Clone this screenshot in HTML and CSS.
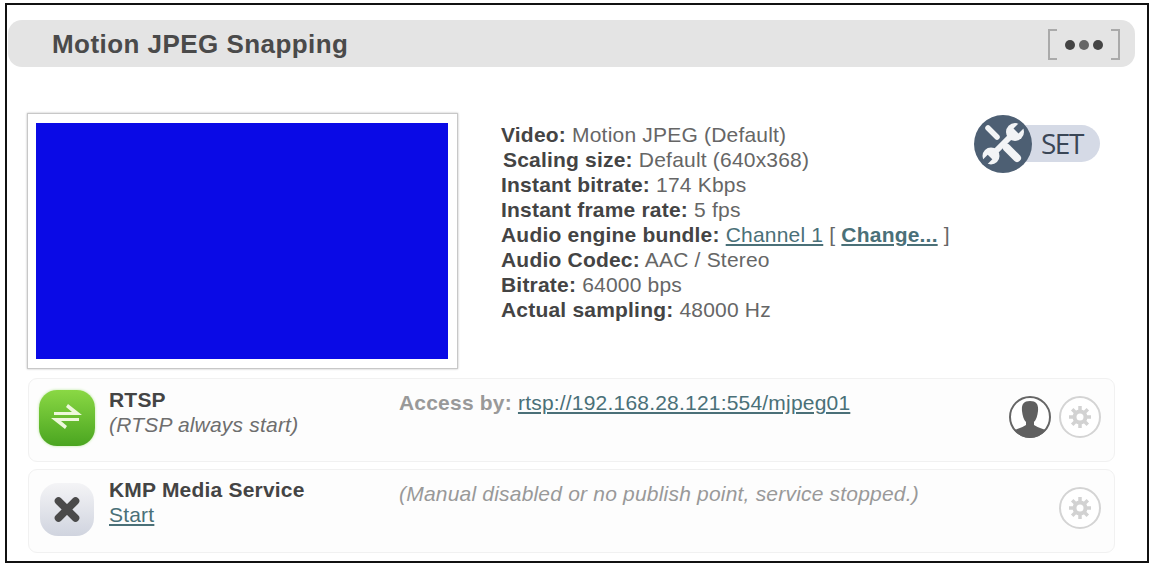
FILE: index.html
```html
<!DOCTYPE html>
<html lang="en">
<head>
<meta charset="utf-8">
<title>Motion JPEG Snapping</title>
<link rel="stylesheet" href="styles.css">
</head>
<body>
<main class="frame">
  <header class="head">
    <h1>Motion JPEG Snapping</h1>
    <span class="more"><i></i><i class="mid"></i><i></i></span>
  </header>
  <section class="top">
    <div class="thumb"><div class="video"></div></div>
    <div class="info">
      <div><b>Video:</b> Motion JPEG (Default)</div>
      <div class="nudge"><b>Scaling size:</b> Default (640x368)</div>
      <div><b>Instant bitrate:</b> 174 Kbps</div>
      <div><b>Instant frame rate:</b> 5 fps</div>
      <div><b>Audio engine bundle:</b> <a href="#">Channel 1</a> [ <a href="#" class="strong">Change...</a> ]</div>
      <div><b>Audio Codec:</b> AAC / Stereo</div>
      <div><b>Bitrate:</b> 64000 bps</div>
      <div><b>Actual sampling:</b> 48000 Hz</div>
    </div>
    <div class="set">
      <span class="set-icon">
        <svg viewBox="0 0 58 58" width="58" height="58" aria-hidden="true">
          <circle cx="29" cy="29" r="29" fill="#4d5f73"/>
          <path d="M14 13 L23 22" stroke="#f2f4f6" stroke-width="5.5" stroke-linecap="round"/>
          <path d="M33 33 L43 43" stroke="#f2f4f6" stroke-width="8" stroke-linecap="round"/>
          <path d="M19 39 L39 19" stroke="#f2f4f6" stroke-width="6"/>
          <circle cx="41" cy="17" r="9" fill="#f2f4f6"/>
          <circle cx="17" cy="41" r="8.5" fill="#f2f4f6"/>
          <path d="M42 16 L49 9" stroke="#4d5f73" stroke-width="7"/>
          <path d="M16 42 L9 49" stroke="#4d5f73" stroke-width="6.5"/>
        </svg>
      </span>
      <span class="set-label">SET</span>
    </div>
  </section>
  <section class="row">
    <span class="badge green">
      <svg viewBox="0 0 56 56" width="56" height="56" aria-hidden="true">
        <path d="M29 14 L43 25 H15 V22 H33 L27 17 Z" fill="#eef8dc"/>
        <path d="M26 39 L12 28 H40 V31 H22 L28 36 Z" fill="#eef8dc"/>
      </svg>
    </span>
    <div class="name"><b>RTSP</b><em>(RTSP always start)</em></div>
    <div class="detail"><b class="soft">Access by:</b> <a href="#">rtsp://192.168.28.121:554/mjpeg01</a></div>
    <div class="actions">
      <span class="user">
        <svg viewBox="0 0 44 44" width="44" height="44" aria-hidden="true">
          <circle cx="22" cy="22" r="20" fill="#fff" stroke="#666" stroke-width="2"/>
          <path d="M22 6 C15 6 13.5 10 14 16 C14.5 21 16 25 18 27 V30 C13 33 9 34 6 35 A20 20 0 0 0 38 35 C35 34 31 33 26 30 V27 C28 25 29.5 21 30 16 C30.5 10 29 6 22 6 Z" fill="#606060"/>
        </svg>
      </span>
      <span class="gear">
        <svg viewBox="0 0 44 44" width="44" height="44" aria-hidden="true">
          <circle cx="22" cy="22" r="20" fill="#fff" stroke="#d4d4d4" stroke-width="2"/>
          <circle cx="22" cy="22" r="7.5" fill="#d2d2d2"/>
          <path d="M22 11V33M11 22H33M14.2 14.2L29.8 29.8M29.8 14.2L14.2 29.8" stroke="#d2d2d2" stroke-width="3.5"/>
          <circle cx="22" cy="22" r="3.5" fill="#fff"/>
        </svg>
      </span>
    </div>
  </section>
  <section class="row second">
    <span class="badge grey">
      <svg viewBox="0 0 56 56" width="54" height="53" aria-hidden="true">
        <path d="M19 19 L37 37 M37 19 L19 37" stroke="#4a4a4a" stroke-width="8" stroke-linecap="round"/>
      </svg>
    </span>
    <div class="name"><b>KMP Media Service</b><a href="#">Start</a></div>
    <div class="detail"><em class="muted">(Manual disabled or no publish point, service stopped.)</em></div>
    <div class="actions">
      <span class="gear">
        <svg viewBox="0 0 44 44" width="44" height="44" aria-hidden="true">
          <circle cx="22" cy="22" r="20" fill="#fff" stroke="#d4d4d4" stroke-width="2"/>
          <circle cx="22" cy="22" r="7.5" fill="#d2d2d2"/>
          <path d="M22 11V33M11 22H33M14.2 14.2L29.8 29.8M29.8 14.2L14.2 29.8" stroke="#d2d2d2" stroke-width="3.5"/>
          <circle cx="22" cy="22" r="3.5" fill="#fff"/>
        </svg>
      </span>
    </div>
  </section>
</main>
</body>
</html>
```

FILE: styles.css
```css
* { box-sizing: border-box; }
html, body { margin: 0; padding: 0; background: #fff; }
body {
  width: 1153px;
  height: 566px;
  overflow: hidden;
  padding: 3px 4px 0 5px;
  font-family: "Liberation Sans", Arial, sans-serif;
  color: #666;
}
.frame {
  width: 1144px;
  height: 560px;
  border: 2px solid #111;
  padding: 15px 12px 0 1px;
  background: #fff;
}
.head {
  height: 47px;
  background: #e4e4e4;
  border-radius: 14px;
  display: flex;
  align-items: center;
  justify-content: space-between;
  padding: 0 15px 0 44px;
}
.head h1 {
  margin: 0;
  padding-top: 2px;
  font-size: 26px;
  letter-spacing: 0.45px;
  font-weight: bold;
  color: #4a4a4a;
}
.more {
  width: 72px;
  height: 31px;
  margin-top: 2px;
  display: flex;
  align-items: center;
  justify-content: center;
  gap: 4px;
  position: relative;
}
.more::before,
.more::after {
  content: "";
  position: absolute;
  top: 0;
  bottom: 0;
  width: 7px;
  border: 2px solid #aaa;
}
.more::before { left: 0; border-right: 0; }
.more::after { right: 0; border-left: 0; }
.more i {
  width: 10px;
  height: 10px;
  border-radius: 50%;
  background: #444;
}
.more i.mid { background: #666; }
.top {
  display: flex;
  align-items: flex-start;
  padding: 46px 0 0 19px;
  height: 311px;
}
.thumb {
  width: 431px;
  height: 256px;
  flex: none;
  background: #fff;
  border: 1px solid #c8c8c8;
  box-shadow: 0 0 2px #bbb;
  padding: 9px 9px 9px 8px;
}
.video {
  width: 412px;
  height: 236px;
  background: #0a0ae6;
}
.info {
  margin: 9px 0 0 43px;
  width: 473px;
  font-size: 21px;
  letter-spacing: 0.2px;
  line-height: 25px;
  white-space: nowrap;
}
.info b { color: #444; }
.nudge { padding-left: 2px; }
a { color: #4a7078; text-decoration: underline; }
a.strong { font-weight: bold; }
.set {
  margin: 2px 0 0 0;
  position: relative;
  flex: none;
  width: 126px;
  height: 58px;
}
.set-label {
  display: block;
  margin: 10px 0 0 40px;
  width: 86px;
  height: 37px;
  padding-left: 27px;
  background: #d5dae6;
  border-radius: 0 19px 19px 0;
  font-family: "Open Sans", sans-serif;
  font-size: 28px;
  letter-spacing: -1.5px;
  line-height: 37px;
  color: #3a4656;
}
.set-icon {
  position: absolute;
  left: 0;
  top: 0;
  z-index: 1;
  width: 58px;
  height: 58px;
}
.set-icon svg, .badge svg, .user svg, .gear svg {
  display: block;
  filter: blur(0.4px);
}
.row {
  margin-left: 20px;
  height: 84px;
  width: 1087px;
  border: 1px solid #f1f1f1;
  border-radius: 9px;
  background: #fdfdfd;
  display: flex;
  align-items: flex-start;
  padding: 8px 12px 0 10px;
  font-size: 21px;
  letter-spacing: 0.2px;
  line-height: 25px;
}
.row.second { margin-top: 7px; }
.badge {
  width: 56px;
  height: 56px;
  flex: none;
  border-radius: 18px;
  margin-top: 3px;
}
.green {
  background: linear-gradient(#8ad844, #4aa520);
  box-shadow: 0 0 3px #b8e89a;
}
.grey {
  width: 54px;
  height: 53px;
  margin: 5px 1px 0 1px;
  background: linear-gradient(#f4f4f6, #d0d4df);
}
.name {
  width: 290px;
  margin-left: 14px;
  flex: none;
  display: flex;
  flex-direction: column;
  align-items: flex-start;
}
.second .name { margin-top: -1px; }
.name b { color: #444; }
.name em { font-style: italic; color: #6e6e6e; }
.detail {
  flex: 1;
  white-space: nowrap;
  padding-top: 3px;
}
.soft { color: #999; }
.muted { color: #999; font-style: italic; }
.actions {
  display: flex;
  gap: 6px;
  justify-content: flex-end;
  margin-top: 8px;
  flex: none;
}
```
